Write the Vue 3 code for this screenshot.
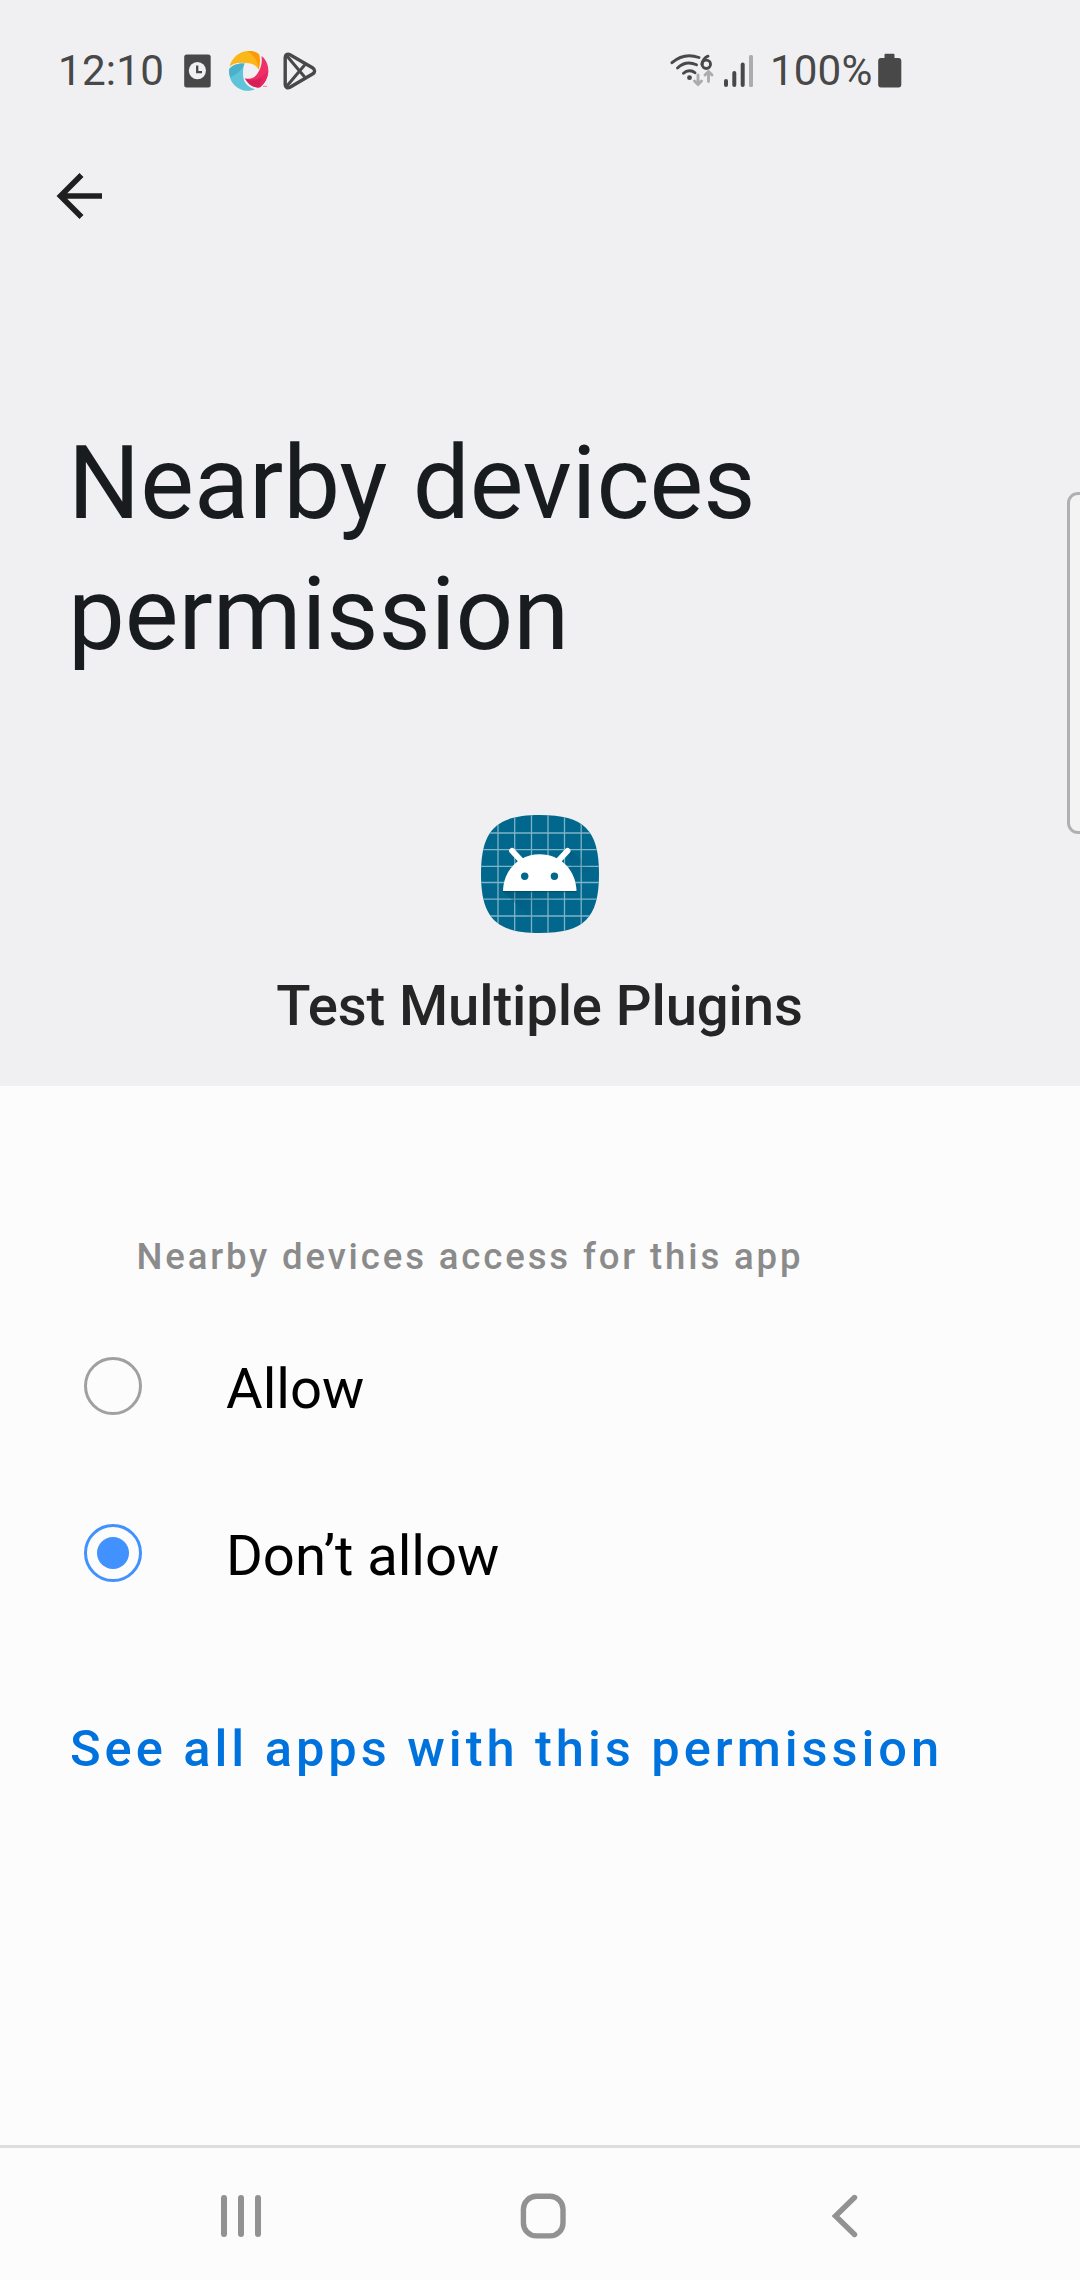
<script setup>
import { ref } from 'vue'

const choice = ref('deny')
const options = [
  { id: 'allow', label: 'Allow' },
  { id: 'deny', label: 'Don’t allow' },
]
</script>

<template>
  <div class="screen">
    <header class="header">
      <div class="status">
        <span class="time">12:10</span>
        <svg class="ic-clock" width="27" height="34" viewBox="0 0 27 34">
          <rect x="0.2" y="0.4" width="26.5" height="33" rx="2.5" fill="#484848" />
          <circle cx="13.4" cy="16.6" r="8.6" fill="#f0f0f2" />
          <path d="M13.2 11.5V18.2H18" fill="none" stroke="#484848" stroke-width="2.3" />
        </svg>
        <svg class="ic-swirl" width="40" height="40" viewBox="0 0 40 40">
          <path d="M0.5 15.5C3.5 5 12 0 19 0C24 0 27.500 1 30 3.300C31.300 8 31 13 29.700 18.500C27 14 22 12 17 12C10 11 4 12 0.500 15.500Z" fill="#fbb61a" />
          <path d="M18 0C24 0 27.500 1 30 3.300C31.300 8 31 13 29.700 18.500C29 10 25 4 18 0Z" fill="#fb9a06" />
          <path d="M32.500 5C37 8.500 39.500 14 39.300 20C39 27 35.500 33 31 36.300C25 37 19.500 34 16 27.500C21 28.500 26 26.500 28.500 22.500C32 17 33.500 12 32.500 5Z" fill="#ef3068" />
          <path d="M16 27.500C23 30 32 27 39.300 20C39 27 35.500 33 31 36.300C25 37 19.500 34 16 27.500Z" fill="#e92563" />
          <path d="M16 27.500C22 31 28 29 33 27C31 31 31 34 31 36.300C25 37 19.500 34 16 27.500Z" fill="#c9194f" opacity=".55" />
          <path d="M15.500 12.500C8 12 3 14.500 0.300 18C-0.500 27 3 33 9 37C15 40.500 21 40.500 26 38.300C18 36 14 31 14 23C14 18.500 14.500 15 15.500 12.500Z" fill="#5fc3da" />
          <path d="M15.500 12.500C13 20 7 23 1.500 26.500C0 23.500 0 20.500 0.300 18C3 14.500 8 12 15.500 12.500Z" fill="#49b1c9" />
          <path d="M34 35.300h4" stroke="#ef7c9c" stroke-width="1" />
        </svg>
        <svg class="ic-play" width="34" height="38" viewBox="0 0 34 38" fill="none" stroke="#484848" stroke-linejoin="round">
          <path d="M2.200 5.500C2.200 2.500 4.500 1.300 7 2.700L29.500 15.800C32.300 17.500 32.300 20.300 29.500 22L7 35.300C4.500 36.700 2.200 35.500 2.200 32.500Z" stroke-width="3.400" />
          <path d="M3.500 3.500L22.500 26M3.500 34.500L22.500 12" stroke-width="3" />
        </svg>
        <div class="grow"></div>
        <svg class="ic-wifi" width="46" height="36" viewBox="0 0 46 36" fill="none" stroke-linecap="round">
          <g stroke="#484848" stroke-width="2.900">
            <path d="M2 9.700C10 2.700 20 1.300 29 4.500" />
            <path d="M7.500 15C13 9.800 20 8.800 26.500 11.800" />
            <path d="M13.500 20.200C17 17 22 17 25 19.800" />
            <path d="M38 3.200C34.500 4.500 32 8 32 11.500" />
            <circle cx="36.300" cy="11.300" r="4.200" />
          </g>
          <circle cx="19.500" cy="24.700" r="2.400" fill="#484848" />
          <path d="M28 22V31M24.500 28L28 31.500L31.500 28M38.500 28.500V19.500M35 22L38.500 18.500L42 22" stroke="#acacae" stroke-width="2.900" />
        </svg>
        <svg class="ic-signal" width="30" height="34" viewBox="0 0 30 34">
          <g fill="#484848">
            <rect x="0" y="25" width="4" height="8" rx="2" />
            <rect x="8.300" y="17" width="4" height="16" rx="2" />
            <rect x="16.700" y="8.500" width="4" height="24.500" rx="2" />
          </g>
          <rect x="25" y="1" width="4" height="32" rx="1.500" fill="#acacae" />
        </svg>
        <span class="pct">100%</span>
        <svg class="ic-batt" width="24" height="36" viewBox="0 0 24 36">
          <path d="M6.500 1.800Q6.500 0.800 7.500 0.800H15.500Q16.500 0.800 16.500 1.800V5H20.500Q23.300 5 23.300 8V31.500Q23.300 34.500 20.500 34.500H3Q0.200 34.500 0.200 31.500V8Q0.200 5 3 5H6.500Z" fill="#484848" />
        </svg>
      </div>

      <div class="toolbar">
        <svg width="50" height="50" viewBox="0 0 50 50" fill="none" stroke="#1f1f1f" stroke-width="5.600">
          <path d="M26.500 4L5.500 25L26.500 46M6 25H47" />
        </svg>
      </div>

      <h1 class="title">Nearby devices<br />permission</h1>

      <div class="app">
        <svg class="app-icon" width="118" height="124" viewBox="0 0 118 124">
          <defs>
            <clipPath id="squircle">
              <path d="M59 0C103 0 118 15 118 59C118 103 103 118 59 118C15 118 0 103 0 59C0 15 15 0 59 0Z" />
            </clipPath>
            <linearGradient id="cast" x1="0" y1="0" x2="1" y2="1">
              <stop offset="0" stop-color="#004a6b" stop-opacity=".7" />
              <stop offset=".6" stop-color="#004a6b" stop-opacity="0" />
            </linearGradient>
          </defs>
          <g clip-path="url(#squircle)">
            <rect width="118" height="118" fill="#01678d" />
            <path d="M17 0V118M33.700 0V118M50.500 0V118M67 0V118M83.500 0V118M100.200 0V118M0 18H118M0 34.700H118M0 51.300H118M0 67.500H118M0 84.200H118M0 101H118" stroke="#7fb3c6" stroke-width="1.300" />
            <path d="M22 76L64 118H118V60L87 33L95 76Z" fill="url(#cast)" />
          </g>
          <path d="M22 76.500H96" stroke="#00465f" stroke-width="1.500" opacity=".6" />
          <path d="M31 35.800L41 46.500M86.600 35.800L76.600 46.500" stroke="#fff" stroke-width="5.800" stroke-linecap="round" />
          <path d="M22 76C22.500 55 38 39.200 58.700 39.200C79.500 39.200 95 55 95.500 76Z" fill="#fff" />
          <circle cx="43.700" cy="61.200" r="3.700" fill="#01678d" />
          <circle cx="73.400" cy="61.200" r="3.700" fill="#01678d" />
        </svg>
        <div class="app-name">Test Multiple Plugins</div>
      </div>
      <div class="edge-handle"></div>
    </header>

    <main class="content">
      <div class="caption">Nearby devices access for this app</div>
      <div
        v-for="o in options"
        :key="o.id"
        class="option"
        @click="choice = o.id"
      >
        <span class="radio" :class="{ checked: choice === o.id }"></span>
        <span class="option-label">{{ o.label }}</span>
      </div>
      <a class="link">See all apps with this permission</a>
    </main>

    <nav class="nav">
      <svg class="recents" width="42" height="44" viewBox="0 0 42 44" fill="#929292">
        <rect x="1" y="1" width="6" height="42" rx="3" />
        <rect x="18" y="1" width="6" height="42" rx="3" />
        <rect x="35" y="1" width="6" height="42" rx="3" />
      </svg>
      <svg class="home" width="46" height="46" viewBox="0 0 46 46" fill="none">
        <rect x="3.400" y="3.300" width="39.600" height="39.600" rx="13" stroke="#929292" stroke-width="5.400" />
      </svg>
      <svg class="back" width="28" height="44" viewBox="0 0 28 44" fill="none">
        <path d="M23.500 3.500L4.500 22L23.500 40.500" stroke="#929292" stroke-width="5.400" stroke-linecap="round" />
      </svg>
    </nav>
  </div>
</template>

<style>
body {
  margin: 0;
  background: #fcfcfc;
}
</style>

<style scoped>
.screen {
  position: relative;
  display: flex;
  flex-direction: column;
  width: 1080px;
  height: 2280px;
  background: #fcfcfc;
  font-family: Roboto, sans-serif;
  overflow: hidden;
}
.screen svg {
  display: block;
  flex: none;
}
.header {
  position: relative;
  height: 1086px;
  background: #f0f0f2;
}
.status {
  display: flex;
  align-items: center;
  box-sizing: border-box;
  height: 142px;
  padding: 0 178px 0 58px;
  font-size: 42.200px;
  line-height: 80px;
  color: #484848;
}
.grow {
  flex: 1;
}
.time {
  width: 126px;
  letter-spacing: 0.2px;
  white-space: nowrap;
}
.ic-swirl {
  margin-left: 18px;
}
.ic-play {
  margin-left: 14px;
}
.ic-signal {
  margin-left: 8px;
}
.pct {
  width: 108px;
  margin-left: 16px;
  letter-spacing: 0.1px;
  white-space: nowrap;
}
.toolbar {
  height: 108px;
  padding-left: 55px;
  display: flex;
  align-items: center;
}
.title {
  margin: 168px 0 0 68px;
  font-size: 101.250px;
  line-height: 131px;
  font-weight: 400;
  color: #191c1e;
}
.app {
  display: flex;
  flex-direction: column;
  align-items: center;
  padding-top: 135px;
}
.app-name {
  margin-top: 27px;
  padding-right: 1px;
  font-size: 56.250px;
  line-height: 80px;
  font-weight: 500;
  letter-spacing: -0.14px;
  color: #252525;
}
.edge-handle {
  position: absolute;
  top: 492px;
  left: 1067px;
  width: 30px;
  height: 336px;
  border: 3px solid #b0b0b2;
  border-radius: 11px;
  background: #f3f3f4;
}
.content {
  flex: 1;
  display: flex;
  flex-direction: column;
  align-items: flex-start;
  padding-top: 143px;
}
.caption {
  height: 73px;
  padding-left: 136.500px;
  font-size: 36.560px;
  line-height: 56px;
  font-weight: 500;
  letter-spacing: 2.860px;
  color: #8b8b8b;
  white-space: nowrap;
}
.option {
  display: flex;
  align-items: center;
  height: 167px;
  padding-left: 84px;
}
.radio {
  box-sizing: border-box;
  width: 58px;
  height: 58px;
  border: 3px solid #a0a0a0;
  border-radius: 50%;
  display: flex;
  align-items: center;
  justify-content: center;
}
.radio.checked {
  border-color: #4191ff;
}
.radio.checked::after {
  content: '';
  width: 32px;
  height: 32px;
  border-radius: 50%;
  background: #4191ff;
}
.option-label {
  margin-left: 84px;
  padding-top: 6px;
  font-size: 56.250px;
  line-height: 80px;
  letter-spacing: -0.05px;
  color: #000;
}
.link {
  margin: 73px 0 0 70px;
  font-size: 50.600px;
  line-height: 80px;
  font-weight: 500;
  letter-spacing: 3.960px;
  color: #0072de;
  white-space: nowrap;
}
.nav {
  display: flex;
  align-items: center;
  box-sizing: border-box;
  height: 135px;
  border-top: 3px solid #dcdddc;
  padding: 4px 0 0 220px;
}
.home {
  margin-left: 258px;
}
.back {
  margin-left: 265px;
}
</style>
